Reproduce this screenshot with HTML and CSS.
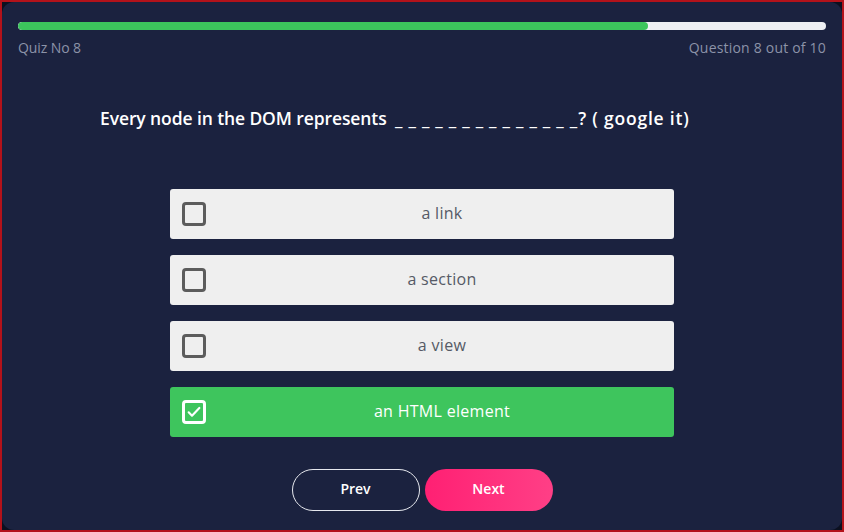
FILE: index.html
```html
<!DOCTYPE html>
<html>
<head>
<meta charset="utf-8">
<link rel="stylesheet" href="styles.css">
</head>
<body>
<div class="frame">
  <div class="card">
    <div class="progress"><div class="progress-fill" style="width:78%"></div></div>
    <div class="meta">
      <span>Quiz No 8</span>
      <span class="count">Question 8 out of 10</span>
    </div>
    <h2 class="question">Every node in the DOM represents <span class="blank">______________</span><span class="tail">? ( google it)</span></h2>
    <div class="options">
      <div class="option"><span class="box"></span><span class="label">a link</span></div>
      <div class="option"><span class="box"></span><span class="label">a section</span></div>
      <div class="option"><span class="box"></span><span class="label">a view</span></div>
      <div class="option selected"><span class="box"><svg viewBox="0 0 24 24" width="16" height="16"><path d="M4 12.5l5 5L20 6" fill="none" stroke="#fff" stroke-width="3.2" stroke-linecap="round" stroke-linejoin="round"/></svg></span><span class="label">an HTML element</span></div>
    </div>
    <div class="actions">
      <button class="btn prev">Prev</button>
      <button class="btn next">Next</button>
    </div>
  </div>
</div>
</body>
</html>
```
FILE: styles.css
```css
html, body {
  margin: 0;
  padding: 0;
  height: 100%;
}
body {
  font-family: "Open Sans", "Liberation Sans", sans-serif;
}
.frame {
  box-sizing: border-box;
  width: 844px;
  height: 532px;
  border: 2px solid #b3121a;
  background: #0b1020;
}
.card {
  box-sizing: border-box;
  height: 100%;
  background: #1b223f;
  border-radius: 12px;
  padding: 20px 16px 0 16px;
  display: flex;
  flex-direction: column;
}
.progress {
  height: 8px;
  background: #eef0f4;
  border-radius: 4px;
  overflow: hidden;
}
.progress-fill {
  height: 100%;
  background: #3cc55c;
  border-radius: 4px;
}
.meta {
  display: flex;
  justify-content: space-between;
  margin-top: 8px;
  font-size: 14px;
  color: #8c93a8;
  letter-spacing: -0.1px;
}
.count {
  letter-spacing: 0.2px;
}
.question {
  margin: 49px 0 0 82px;
  font-size: 17.5px;
  font-weight: 600;
  color: #ffffff;
  letter-spacing: -0.1px;
}
.blank {
  display: inline-block;
  letter-spacing: 6px;
  margin-left: 4px;
  margin-right: -5px;
}
.tail {
  letter-spacing: 0.8px;
}
.options {
  margin: 59px auto 0;
  width: 504px;
  display: flex;
  flex-direction: column;
  gap: 16px;
}
.option {
  height: 50px;
  background: #efefef;
  border-radius: 3px;
  display: flex;
  align-items: center;
  padding: 0 12px;
  color: #555a66;
  font-size: 16px;
  letter-spacing: 0.3px;
}
.box {
  box-sizing: border-box;
  width: 24px;
  height: 24px;
  border: 3px solid #5c5c5c;
  border-radius: 4px;
  display: flex;
  align-items: center;
  justify-content: center;
  flex: none;
}
.label {
  flex: 1;
  text-align: center;
  margin-right: -16px;
  margin-top: -3px;
}
.option.selected {
  background: #3ec55d;
  color: #ffffff;
  font-weight: 500;
}
.option.selected .box {
  border-color: #ffffff;
}
.actions {
  margin-top: 32px;
  display: flex;
  justify-content: center;
  gap: 5px;
}
.btn {
  width: 128px;
  height: 42px;
  border-radius: 21px;
  padding: 0 0 3px;
  font-family: "Open Sans", "Liberation Sans", sans-serif;
  font-size: 14px;
  font-weight: 600;
  color: #fff;
  cursor: pointer;
}
.prev {
  background: transparent;
  border: 1px solid #e6e8ee;
}
.next {
  border: none;
  background: linear-gradient(90deg, #ff2073, #ff3f86);
}
```
